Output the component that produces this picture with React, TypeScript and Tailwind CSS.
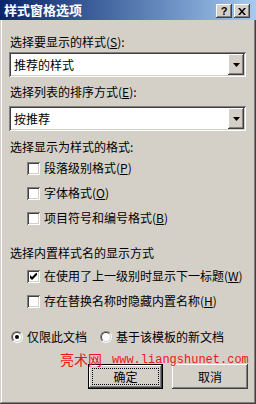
import React from "react";

const font = { fontFamily: '"Noto Sans CJK SC", "Noto Sans", sans-serif' };

function Raised({ className = "", children }: { className?: string; children?: React.ReactNode }) {
    return (
        <div
            className={
                "bg-[#d4d0c8] shadow-[inset_-1px_-1px_#404040,inset_1px_1px_#ffffff,inset_-2px_-2px_#808080,inset_2px_2px_#d4d0c8] " +
                className
            }
        >
            {children}
        </div>
    );
}

function Combo({ value }: { value: string }) {
    return (
        <div className="ml-[9px] flex h-[25px] w-[237px] bg-white p-[2px] shadow-[inset_1px_1px_#808080,inset_-1px_-1px_#ffffff,inset_2px_2px_#404040,inset_-2px_-2px_#d4d0c8]">
            <div className="flex flex-1 items-center pl-[3px] text-[12px] leading-[16px] text-black">{value}</div>
            <Raised className="flex h-[21px] w-[16px] items-center justify-center">
                <svg width="7" height="4" viewBox="0 0 7 4">
                    <path d="M0 0h7L3.5 4z" fill="#000" />
                </svg>
            </Raised>
        </div>
    );
}

function Check({ label, checked = false, className = "" }: { label: React.ReactNode; checked?: boolean; className?: string }) {
    return (
        <div className={"ml-[27px] flex h-[16px] items-center gap-[4px] " + className}>
            <div className="flex h-[13px] w-[13px] shrink-0 items-center justify-center bg-white shadow-[inset_1px_1px_#808080,inset_-1px_-1px_#ffffff,inset_2px_2px_#404040,inset_-2px_-2px_#d4d0c8]">
                {checked && (
                    <svg width="7" height="7" viewBox="0 0 7 7">
                        <path d="M0 2v3l2 2 5-5V-1L2 4z" fill="#000" />
                    </svg>
                )}
            </div>
            <span className="whitespace-nowrap text-[12px] leading-[16px]">{label}</span>
        </div>
    );
}

function Radio({ label, on = false }: { label: string; on?: boolean }) {
    return (
        <div className="flex items-center gap-[4px]">
            <div className="h-[12px] w-[12px] rounded-full border border-t-[#808080] border-l-[#808080] border-r-white border-b-white">
                <div className="flex h-full w-full items-center justify-center rounded-full border border-t-[#404040] border-l-[#404040] border-r-[#d4d0c8] border-b-[#d4d0c8] bg-white">
                    {on && <div className="h-[4px] w-[4px] rounded-full bg-black" />}
                </div>
            </div>
            <span className="whitespace-nowrap text-[12px] leading-[16px]">{label}</span>
        </div>
    );
}

export default function App() {
    return (
        <div
            style={font}
            className="relative flex h-[404px] w-[256px] flex-col bg-[#d4d0c8] text-black shadow-[inset_-1px_-1px_#404040,inset_1px_1px_#d4d0c8,inset_-2px_-2px_#808080,inset_2px_2px_#ffffff]"
        >
            {/* Title bar */}
            <div className="flex h-[20px] items-center justify-between bg-gradient-to-r from-[#0a246a] to-[#a6caf0] pl-[4px] pr-[6px]">
                <span className="text-[13px] font-bold leading-[16px] text-white">样式窗格选项</span>
                <div className="flex gap-[2px] pt-[2px]">
                    <Raised className="flex h-[14px] w-[16px] items-center justify-center">
                        <span className="font-['Liberation_Sans'] text-[11px] font-bold leading-none">?</span>
                    </Raised>
                    <Raised className="flex h-[14px] w-[16px] items-center justify-center">
                        <svg width="8" height="7" viewBox="0 0 8 7">
                            <path d="M0 0h2l2 2.5L6 0h2L5 3.5 8 7H6L4 4.5 2 7H0l3-3.5z" fill="#000" />
                        </svg>
                    </Raised>
                </div>
            </div>

            <div className="ml-[10px] mt-[14px] text-[12px] leading-[16px]">
                选择要显示的样式(<u>S</u>):
            </div>
            <div className="mt-[2px]">
                <Combo value="推荐的样式" />
            </div>

            <div className="ml-[10px] mt-[7px] text-[12px] leading-[16px]">
                选择列表的排序方式(<u>E</u>):
            </div>
            <div className="mt-[6px]">
                <Combo value="按推荐" />
            </div>

            <div className="ml-[10px] mt-[8px] text-[12px] leading-[16px]">选择显示为样式的格式:</div>
            <Check className="mt-[5px]" label={<>段落级别格式(<u>P</u>)</>} />
            <Check className="mt-[9px]" label={<>字体格式(<u>O</u>)</>} />
            <Check className="mt-[9px]" label={<>项目符号和编号格式(<u>B</u>)</>} />

            <div className="ml-[10px] mt-[19px] text-[12px] leading-[16px]">选择内置样式名的显示方式</div>
            <Check className="mt-[7px]" checked label={<>在使用了上一级别时显示下一标题(<u>W</u>)</>} />
            <Check className="mt-[9px]" label={<>存在替换名称时隐藏内置名称(<u>H</u>)</>} />

            <div className="ml-[11px] mt-[20px] flex gap-[13px]">
                <Radio label="仅限此文档" on />
                <Radio label="基于该模板的新文档" />
            </div>

            <div className="ml-[88px] mt-[19px] flex gap-[9px]">
                <div className="h-[25px] w-[75px] border border-black">
                    <Raised className="flex h-full w-full items-center justify-center p-[3px]">
                        <div className="flex h-full w-full items-center justify-center border border-dotted border-black text-[12px] leading-[16px]">
                            确定
                        </div>
                    </Raised>
                </div>
                <Raised className="flex h-[25px] w-[76px] items-center justify-center text-[12px] leading-[16px]">取消</Raised>
            </div>

            {/* Watermark */}
            <div className="absolute left-[60px] top-[351px] flex items-end gap-[10px] text-[#f01414]">
                <span className="text-[14px] leading-[16px]">亮术网</span>
                <span className="font-['Liberation_Mono'] text-[12px] leading-[14px]">www.liangshunet.com</span>
            </div>
        </div>
    );
}
